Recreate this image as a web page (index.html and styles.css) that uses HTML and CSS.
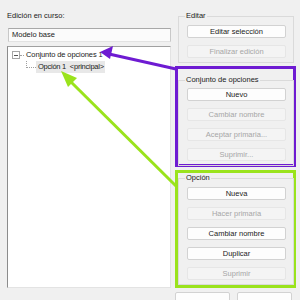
FILE: index.html
```html
<!DOCTYPE html>
<html lang="es">
<head>
    <meta charset="UTF-8">
    <title>Opciones de diseño</title>
    <link rel="stylesheet" href="styles.css">
</head>
<body>
    <div class="dialog">
        <!-- Left column: current edit + tree -->
        <div class="left-col">
            <div class="caption">Edición en curso:</div>
            <div class="combo">Modelo base</div>
            <div class="tree">
                <div class="tree-row root">
                    <span class="expander"></span>
                    <span class="branch-h"></span>
                    <span class="node">Conjunto de opciones 1</span>
                </div>
                <div class="tree-row child">
                    <span class="branch-l"></span>
                    <span class="node selected">Opción 1 <span class="tag">&lt;principal&gt;</span></span>
                </div>
            </div>
        </div>

        <!-- Right column: command groups -->
        <div class="right-col">
            <fieldset class="group group-edit">
                <legend>Editar</legend>
                <button class="btn">Editar selección</button>
                <button class="btn" disabled>Finalizar edición</button>
            </fieldset>

            <div class="mark mark-purple">
                <fieldset class="group">
                    <legend>Conjunto de opciones</legend>
                    <button class="btn">Nuevo</button>
                    <button class="btn" disabled>Cambiar nombre</button>
                    <button class="btn" disabled>Aceptar primaria...</button>
                    <button class="btn" disabled>Suprimir...</button>
                </fieldset>
            </div>

            <div class="mark mark-green">
                <fieldset class="group">
                    <legend>Opción</legend>
                    <button class="btn">Nueva</button>
                    <button class="btn" disabled>Hacer primaria</button>
                    <button class="btn">Cambiar nombre</button>
                    <button class="btn">Duplicar</button>
                    <button class="btn" disabled>Suprimir</button>
                </fieldset>
            </div>

            <div class="footer">
                <button class="btn btn-foot"></button>
                <button class="btn btn-foot"></button>
            </div>
        </div>

        <!-- Annotation arrows -->
        <svg class="arrows" width="300" height="300" viewBox="0 0 300 300">
            <line x1="176" y1="69" x2="109" y2="54" stroke="#6e1bd2" stroke-width="3"/>
            <polygon points="100,52 113,46 110,59" fill="#6e1bd2"/>
            <line x1="176" y1="186" x2="69" y2="80" stroke="#9ae31c" stroke-width="3"/>
            <polygon points="61,71 77,78 68,87" fill="#9ae31c"/>
        </svg>
    </div>
</body>
</html>
```

FILE: styles.css
```css
* {
    margin: 0;
    padding: 0;
    box-sizing: border-box;
}

body {
    background: #f0f0f0;
    font-family: 'Liberation Sans', Arial, sans-serif;
    font-size: 7.5px;
    color: #1a1a1a;
    overflow: hidden;
}

.dialog {
    position: relative;
    width: 300px;
    height: 300px;
    display: flex;
    padding: 11px 0 0 7px;
}

/* Left column */
.left-col {
    width: 164px;
    display: flex;
    flex-direction: column;
}

.caption {
    height: 10px;
    line-height: 10px;
    margin-bottom: 7px;
}

.combo {
    height: 14px;
    line-height: 12px;
    margin-left: 1px;
    width: 163px;
    padding-left: 3px;
    background: #fbfbfb;
    border: 1px solid #c8c8c8;
    border-top-color: #a8a8a8;
    border-bottom-color: #e2e2e2;
}

.tree {
    margin-top: 4px;
    height: 242px;
    background: #fff;
    border: 1px solid #e3e3e3;
    border-left-color: #8c8c8c;
    border-top-color: #a0a0a0;
    padding-top: 2px;
}

.tree-row {
    display: flex;
    align-items: center;
    height: 12px;
}

.root {
    padding-left: 4px;
}

.root .node {
    letter-spacing: -0.1px;
}

.expander {
    width: 8px;
    height: 8px;
    border: 1px solid #a6a6a6;
    position: relative;
    background: #fff;
}

.expander::after {
    content: '';
    position: absolute;
    left: 1px;
    top: 2.5px;
    width: 4px;
    height: 1px;
    background: #555;
}

.branch-h {
    width: 4px;
    border-top: 1px dotted #a0a0a0;
}

.child {
    padding-left: 18px;
}

.branch-l {
    width: 10px;
    height: 7px;
    border-left: 1px dotted #a0a0a0;
    border-bottom: 1px dotted #a0a0a0;
    align-self: flex-start;
}

.node {
    padding: 0 2px;
    line-height: 12px;
    white-space: nowrap;
}

.node.selected {
    background: #e8e8e8;
    padding-right: 1px;
    letter-spacing: -0.25px;
}

.tag {
    margin-left: 2px;
}

/* Right column */
.right-col {
    width: 121px;
    margin-left: 4px;
    display: flex;
    flex-direction: column;
}

.group {
    border: 1px solid #dadada;
    padding: 3px 7px 4px 8px;
    display: flex;
    flex-direction: column;
    gap: 7px;
}

.group legend {
    margin-left: -2px;
    padding: 0 1px;
    line-height: 10px;
}

.group-edit {
    margin: 0 3px;
    height: 54px;
    padding-top: 4px;
}

.mark {
    border: 3px solid;
}

.mark-purple {
    margin-top: 3px;
    height: 101px;
    border-color: #6e1bd2;
    padding-top: 6px;
}

.mark-green {
    margin-top: 3px;
    height: 120px;
    border-color: #9ae31c;
}

.mark-green .group {
    padding-top: 4px;
}

.btn {
    height: 13px;
    width: 99px;
    font-family: inherit;
    font-size: 7.5px;
    color: #1a1a1a;
    background: #fdfdfd;
    border: 1px solid #d2d2d2;
    border-radius: 2px;
    line-height: 11px;
}

.btn:disabled {
    color: #a6a6a6;
    background: #f4f4f4;
    border-color: #e6e6e6;
}

.footer {
    margin-top: 4px;
    display: flex;
    gap: 7px;
}

.btn-foot {
    width: 55px;
    height: 14px;
}

.arrows {
    position: absolute;
    top: 0;
    left: 0;
    pointer-events: none;
}
```
